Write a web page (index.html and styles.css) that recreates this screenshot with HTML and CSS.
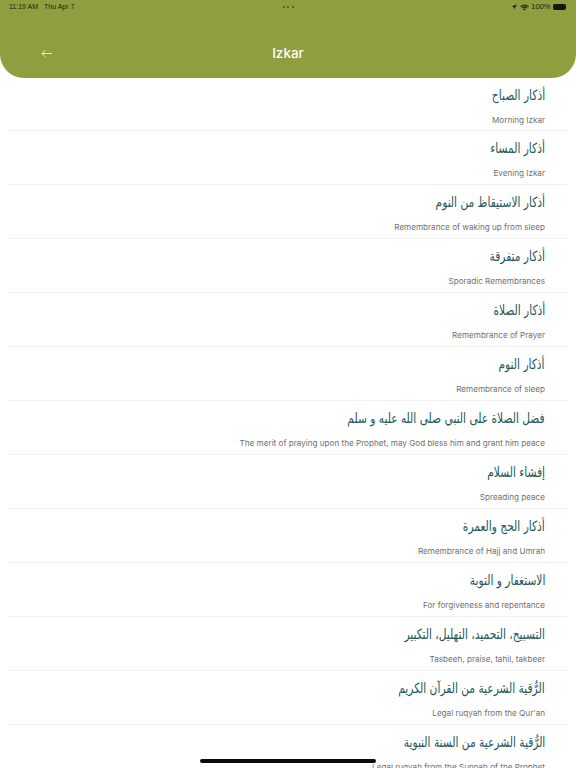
FILE: index.html
```html
<!DOCTYPE html>
<html lang="en">
<head>
<meta charset="utf-8">
<title>Izkar</title>
<link rel="stylesheet" href="styles.css">
</head>
<body>
<div class="screen">
  <header class="header">
    <div class="status">
      <div class="status-left"><span>11:19 AM</span><span>Thu Apr 7</span></div>
      <div class="dots"><i></i><i></i><i></i></div>
      <div class="status-right">
        <svg class="loc" viewBox="0 0 10 10"><path d="M9.5.5 .8 4.6l4.1.5.5 4.2z"/></svg>
        <svg class="wifi" viewBox="0 0 14 10"><path d="M7 9.8 4.9 7.6a3 3 0 0 1 4.2 0zM3.8 6.5 2.6 5.3a6.2 6.2 0 0 1 8.8 0l-1.2 1.2a4.5 4.5 0 0 0-6.4 0zM1.5 4.2.3 3a9.5 9.5 0 0 1 13.4 0l-1.2 1.2a7.8 7.8 0 0 0-11 0z"/></svg>
        <span>100%</span>
        <span class="battery"></span>
      </div>
    </div>
    <div class="bar">
      <svg class="back" viewBox="0 0 11 9"><path d="M11 4.5H1M4.6.9 1 4.5l3.6 3.6"/></svg>
      <h1>Izkar</h1>
      <span></span>
    </div>
  </header>
  <ul class="list">
    <li><p class="ar" dir="rtl">أذكار الصباح</p><p class="en">Morning Izkar</p></li>
    <li><p class="ar" dir="rtl">أذكار المساء</p><p class="en">Evening Izkar</p></li>
    <li><p class="ar" dir="rtl">أذكار الاستيقاظ من النوم</p><p class="en">Remembrance of waking up from sleep</p></li>
    <li><p class="ar" dir="rtl">أذكار متفرقة</p><p class="en">Sporadic Remembrances</p></li>
    <li><p class="ar" dir="rtl">أذكار الصلاة</p><p class="en">Remembrance of Prayer</p></li>
    <li><p class="ar" dir="rtl">أذكار النوم</p><p class="en">Remembrance of sleep</p></li>
    <li><p class="ar" dir="rtl">فضل الصلاة على النبي صلى الله عليه و سلم</p><p class="en">The merit of praying upon the Prophet, may God bless him and grant him peace</p></li>
    <li><p class="ar" dir="rtl">إفشاء السلام</p><p class="en">Spreading peace</p></li>
    <li><p class="ar" dir="rtl">أذكار الحج والعمرة</p><p class="en">Remembrance of Hajj and Umrah</p></li>
    <li><p class="ar" dir="rtl">الاستغفار و التوبة</p><p class="en">For forgiveness and repentance</p></li>
    <li><p class="ar" dir="rtl">التسبيح، التحميد، التهليل، التكبير</p><p class="en">Tasbeeh, praise, tahil, takbeer</p></li>
    <li><p class="ar" dir="rtl">الرُّقية الشرعية من القرآن الكريم</p><p class="en">Legal ruqyah from the Qur'an</p></li>
    <li><p class="ar" dir="rtl">الرُّقية الشرعية من السنة النبوية</p><p class="en">Legal ruqyah from the Sunnah of the Prophet</p></li>
  </ul>
  <div class="home"></div>
</div>
</body>
</html>
```
FILE: styles.css
```css
* { box-sizing: border-box; }
html, body { margin: 0; padding: 0; }
body { background: #fff; font-family: Inter, "Liberation Sans", sans-serif; }
.screen { position: relative; width: 576px; height: 768px; overflow: hidden; background: #fff; }
.header { height: 78px; background: #8f9f3f; border-radius: 0 0 24px 24px; display: flex; flex-direction: column; }
.status { height: 14px; padding: 0 9px; display: grid; grid-template-columns: 1fr auto 1fr; align-items: center; font: 7px/14px "Liberation Sans", sans-serif; color: #1c2210; }
.status-left { display: flex; gap: 6px; }
.dots { display: flex; gap: 2.5px; }
.dots i { width: 2px; height: 2px; border-radius: 50%; background: #4a5320; }
.status-right { display: flex; justify-content: flex-end; align-items: center; gap: 2.5px; font-size: 7.5px; }
.loc { width: 6px; height: 6px; fill: #14180a; }
.wifi { width: 9px; height: 7px; fill: #14180a; }
.battery { width: 13px; height: 6px; border-radius: 2px; background: #14180a; margin-right: 1px; }
.bar { flex: 1; display: grid; grid-template-columns: 1fr auto 1fr; align-items: center; padding-top: 14px; }
.bar h1 { margin: 0; font: 500 13.5px/20px Inter, sans-serif; color: #fff; }
.back { margin-left: 41px; width: 11px; height: 9px; fill: none; stroke: #e6eccb; stroke-width: 1; }
.list { list-style: none; margin: 0; padding: 0 8px; }
.list li { height: 54px; border-bottom: 1px solid #f2f2f0; padding-right: 23px; display: flex; flex-direction: column; align-items: flex-end; }
.list li:first-child { height: 53px; }
.ar { margin: 0; height: 35px; font: 14px/34px "DejaVu Sans", serif; color: #24575a; white-space: nowrap; transform: scaleX(.76); transform-origin: right center; }
.en { margin: 0; font: 400 8.15px/14px Inter, sans-serif; color: #707070; white-space: nowrap; }
.home { position: absolute; left: 200px; top: 759px; width: 176px; height: 4px; border-radius: 2px; background: #0a0a0a; }
```
